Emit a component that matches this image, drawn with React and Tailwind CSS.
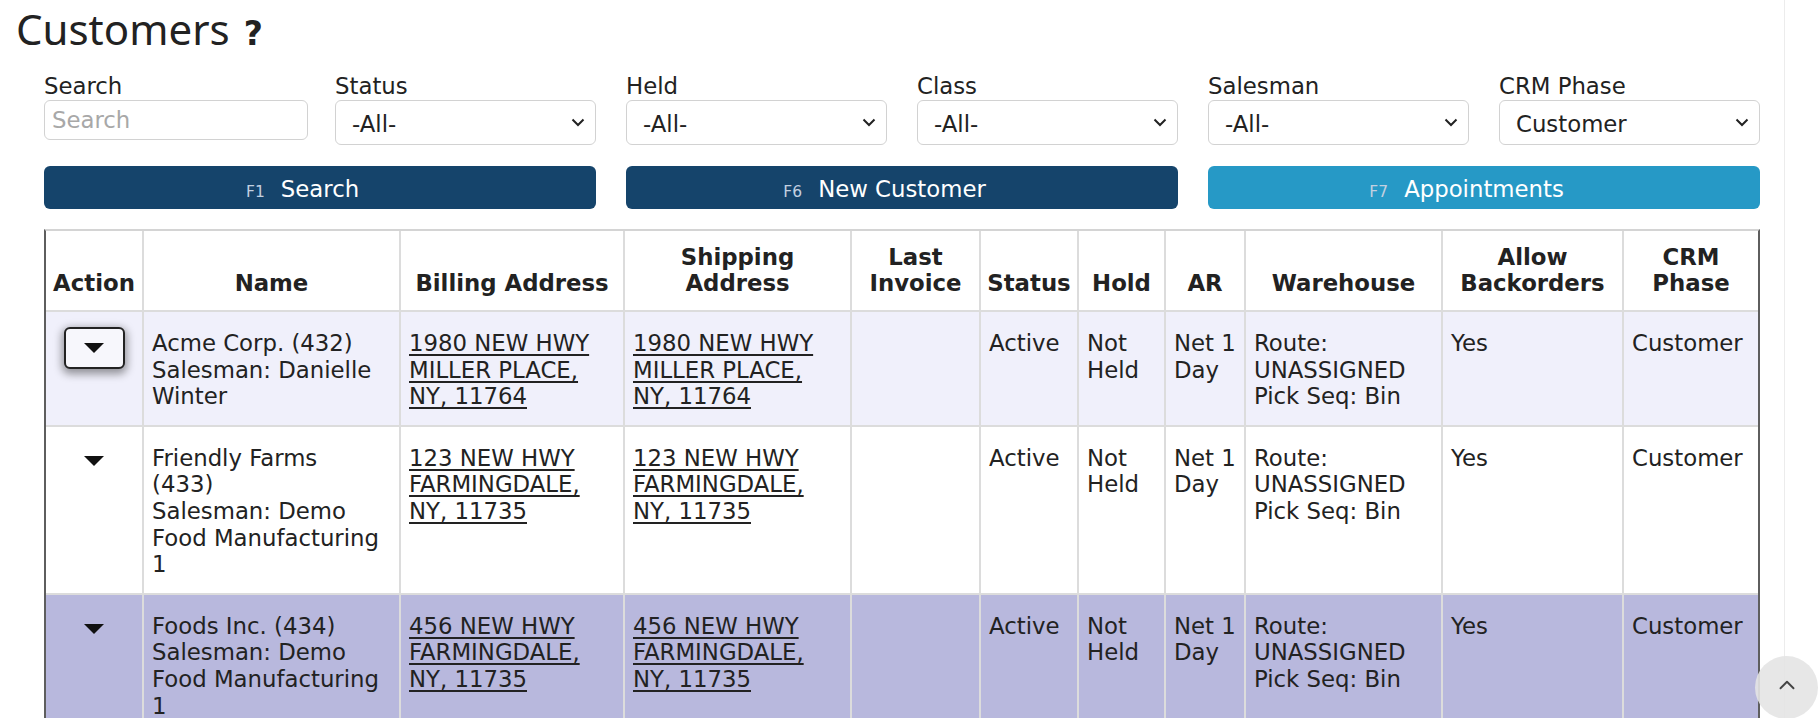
import { ChevronUp } from 'lucide-react'

const filters = [
  { label: 'Search', input: true },
  { label: 'Status', value: '-All-' },
  { label: 'Held', value: '-All-' },
  { label: 'Class', value: '-All-' },
  { label: 'Salesman', value: '-All-' },
  { label: 'CRM Phase', value: 'Customer' },
]

const buttons = [
  { key: 'F1', label: 'Search', cls: 'bg-[#15446b]' },
  { key: 'F6', label: 'New Customer', cls: 'bg-[#15446b]' },
  { key: 'F7', label: 'Appointments', cls: 'bg-[#2699c6]' },
]

const cols = [
  { title: ['Action'], w: 99 },
  { title: ['Name'], w: 257 },
  { title: ['Billing Address'], w: 224 },
  { title: ['Shipping', 'Address'], w: 227 },
  { title: ['Last', 'Invoice'], w: 129 },
  { title: ['Status'], w: 98 },
  { title: ['Hold'], w: 87 },
  { title: ['AR'], w: 80 },
  { title: ['Warehouse'], w: 197 },
  { title: ['Allow', 'Backorders'], w: 181 },
  { title: ['CRM', 'Phase'], w: 137 },
]

const rows = [
  {
    bg: 'bg-[#f0f0fb]',
    boxed: true,
    name: ['Acme Corp. (432)', 'Salesman: Danielle', 'Winter'],
    addr: ['1980 NEW HWY', 'MILLER PLACE,', 'NY, 11764'],
  },
  {
    bg: 'bg-white',
    name: ['Friendly Farms', '(433)', 'Salesman: Demo', 'Food Manufacturing', '1'],
    addr: ['123 NEW HWY', 'FARMINGDALE,', 'NY, 11735'],
  },
  {
    bg: 'bg-[#b8b8dd]',
    name: ['Foods Inc. (434)', 'Salesman: Demo', 'Food Manufacturing', '1'],
    addr: ['456 NEW HWY', 'FARMINGDALE,', 'NY, 11735'],
  },
]

function Lines({ items, underline }) {
  return items.map((t, i) => (
    <div key={i} className={'whitespace-nowrap ' + (underline ? 'underline underline-offset-[3px]' : '')}>{t}</div>
  ))
}

function Caret() {
  return (
    <svg width="20" height="10" viewBox="0 0 20 10" className="block">
      <polygon points="0,0 20,0 10,10" fill="#111" />
    </svg>
  )
}

function Chevron() {
  return (
    <svg width="14" height="9" viewBox="0 0 14 9" className="pointer-events-none absolute right-[11px] top-[18px]">
      <path d="M1.5 1.5 L7 7 L12.5 1.5" fill="none" stroke="#222" strokeWidth="2" />
    </svg>
  )
}

export default function App() {
  const td = 'border-r-2 border-b-2 border-[#dcdcdc] align-top px-[8px] pt-[18px] pb-[15px] last:border-r-0'
  return (
    <div className="relative w-[1820px] h-[718px] overflow-hidden bg-white text-[#222] font-['DejaVu_Sans',sans-serif] text-[22.8px] leading-[26.6px]">
      <div className="h-[73px] pl-[16px] pt-[7px] flex items-baseline">
        <h1 className="font-['Noto_Sans',sans-serif] text-[42px] leading-[44px] font-normal">Customers</h1>
        <span className="ml-[14px] text-[33px] font-bold leading-[33px]">?</span>
      </div>

      <div className="ml-[44px] w-[1716px]">
        <div className="grid grid-cols-6 gap-x-[30px]">
          {filters.map(f => (
            <div key={f.label}>
              <div className="leading-[27px]">{f.label}</div>
              {f.input ? (
                <input
                  placeholder="Search"
                  className="w-[264px] h-[40px] border border-[#d2d2d2] rounded-[6px] px-[7px] text-[22.8px] placeholder:text-[#a8a8a8] outline-none"
                />
              ) : (
                <div className="relative">
                  <select className="appearance-none w-full h-[45px] border border-[#d2d2d2] rounded-[6px] bg-white pl-[16px] pt-[3px] text-[22.8px] text-[#222] outline-none">
                    <option>{f.value}</option>
                  </select>
                  <Chevron />
                </div>
              )}
            </div>
          ))}
        </div>

        <div className="grid grid-cols-3 gap-x-[30px] mt-[21px]">
          {buttons.map(b => (
            <button key={b.key} className={b.cls + ' h-[43px] rounded-[6px] text-white flex items-baseline justify-center pt-[10px]'}>
              <span className="text-[15.5px] text-[#c2d0e0] mr-[16px]">{b.key}</span>
              <span className="text-[22.8px]">{b.label}</span>
              <span className="invisible text-[15.5px] ml-[16px]">{b.key}</span>
            </button>
          ))}
        </div>

        <div className="mt-[20px] border-t-2 border-t-[#d4d4d4] border-l-2 border-r-2 border-l-[#5e5e5e] border-r-[#5e5e5e]">
          <table className="table-fixed border-collapse w-[1712px]">
            <colgroup>
              {cols.map((c, i) => (
                <col key={i} style={{ width: (i === 0 || i === cols.length - 1 ? c.w - 2 : c.w) + 'px' }} />
              ))}
            </colgroup>
            <thead>
              <tr className="h-[80px]">
                {cols.map((c, i) => (
                  <th key={i} className="border-r-2 border-b-2 border-[#dcdcdc] align-bottom text-center font-bold px-[2px] pb-[13px] last:border-r-0">
                    <Lines items={c.title} />
                  </th>
                ))}
              </tr>
            </thead>
            <tbody>
              {rows.map((r, i) => (
                <tr key={i} className={r.bg}>
                  <td className={td + ' text-center'}>
                    {r.boxed ? (
                      <div className="mx-auto -mt-[3px] w-[61px] h-[42px] rounded-[6px] border-2 border-[#222] bg-[#f7f7fc] shadow-[0_3px_8px_2px_rgba(0,0,0,0.4)] flex items-center justify-center">
                        <Caret />
                      </div>
                    ) : (
                      <div className="flex justify-center pt-[11px]">
                        <Caret />
                      </div>
                    )}
                  </td>
                  <td className={td}><Lines items={r.name} /></td>
                  <td className={td}><Lines items={r.addr} underline /></td>
                  <td className={td}><Lines items={r.addr} underline /></td>
                  <td className={td}></td>
                  <td className={td}>Active</td>
                  <td className={td}><Lines items={['Not', 'Held']} /></td>
                  <td className={td}><Lines items={['Net 1', 'Day']} /></td>
                  <td className={td}><Lines items={['Route:', 'UNASSIGNED', 'Pick Seq: Bin']} /></td>
                  <td className={td}>Yes</td>
                  <td className={td}>Customer</td>
                </tr>
              ))}
            </tbody>
          </table>
        </div>
      </div>

      <div className="absolute left-[1784px] top-0 h-full w-px bg-[#ececec]" />
      <div className="absolute left-[1755px] top-[656px] w-[63px] h-[63px] rounded-full bg-[#e4e4e4]/90 flex items-center justify-center">
        <ChevronUp size={26} strokeWidth={1.75} className="text-[#444] -mt-[5px]" />
      </div>
    </div>
  )
}
